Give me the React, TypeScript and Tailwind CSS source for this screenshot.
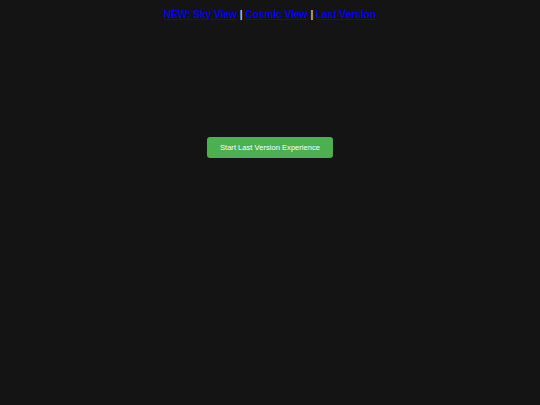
import React from 'react';

export default function App() {
    return (
        <div className="w-[540px] h-[405px] bg-[#141414] font-['Liberation_Sans',Arial,sans-serif] flex flex-col items-center">
            {/* Top nav links */}
            <div className="mt-[9px] text-[10.1px] font-bold text-[#cccccc] leading-[12px]">
                <a href="#" className="text-[#0000ee] underline decoration-1 underline-offset-1">NEW: Sky View</a>
                {' | '}
                <a href="#" className="text-[#0000ee] underline decoration-1 underline-offset-1">Cosmic View</a>
                {' | '}
                <a href="#" className="text-[#0000ee] underline decoration-1 underline-offset-1">Last Version</a>
            </div>

            <button className="mt-[116px] w-[126px] h-[21px] rounded-[3px] bg-[#4caf50] text-white text-[7.6px] flex items-center justify-center">
                Start Last Version Experience
            </button>
        </div>
    );
}
